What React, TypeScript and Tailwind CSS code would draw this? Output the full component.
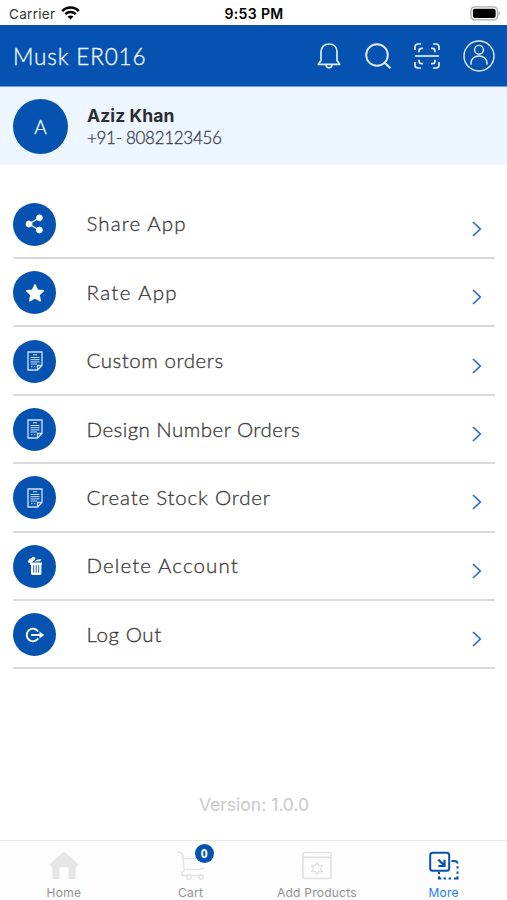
import React from 'react';

const ShareIcon = () => (
    <svg width="19" height="20" viewBox="0 0 19 20" fill="#fff" stroke="#fff">
        <path d="M4 10 L14 4 M4 10 L14 16" strokeWidth="1.3" fill="none" />
        <circle cx="4" cy="10" r="3" />
        <circle cx="14.4" cy="3.8" r="2.9" />
        <circle cx="14.4" cy="16" r="2.9" />
    </svg>
);

const StarIcon = () => (
    <svg width="20" height="20" viewBox="0 0 20 20" fill="#fff" stroke="#fff" strokeWidth="1.4" strokeLinejoin="round">
        <path d="M10 1.8 L12.5 7.1 L18.5 7.7 L14.1 11.8 L15.3 17.8 L10 14.9 L4.7 17.8 L5.9 11.8 L1.5 7.7 L7.5 7.1 Z" />
    </svg>
);

const OrderIcon = () => (
    <svg width="16" height="20" viewBox="0 0 16 20" fill="none" stroke="#cfe1f8" strokeWidth="1.3">
        <path d="M1 1 H15 V14.5 L10.5 19 H1 Z M15 14.5 H10.5 V19" />
        <path d="M6 3.8 H10 M3.5 6.5 H12.5 M3.5 8.7 H12.5 M3.5 10.9 H12.5 M3.5 13 H10 M4 15.7 H5.5 M7 15.7 H8.2" strokeWidth="1" />
    </svg>
);

const TrashIcon = () => (
    <svg width="16" height="20" viewBox="0 0 16 20" fill="#fff">
        <path d="M3 6.4 H15 V9 H14.4 V17.6 Q14.4 19 13 19 H5.4 Q4 19 4 17.6 V9 H3 Z" />
        <path d="M6.7 9.3 V16.6 M9.2 9.3 V16.6 M11.7 9.3 V16.6" stroke="#0552b0" strokeWidth="0.9" />
        <path d="M0.8 6.2 L2 3 L4.5 2.1 L6 0.7 L8.6 1.8 L7.6 4.2 L3.6 7.2 Z" />
        <path d="M7.3 5.5 L10.5 3.4 L14.5 3.2 L13 5.3 Z" />
    </svg>
);

const LogoutIcon = () => (
    <svg width="20" height="16" viewBox="0 0 20 16" fill="none" stroke="#fff" strokeWidth="1.8">
        <path d="M13.2 4.4 A6.3 6.3 0 1 0 13.2 11.6" />
        <path d="M6 8 H16" />
        <path d="M14.5 4.6 L19.2 8 L14.5 11.4 Z" fill="#fff" stroke="none" />
    </svg>
);

const menu = [
    { label: 'Share App', icon: <ShareIcon />, spacing: 'tracking-[1.1px]' },
    { label: 'Rate App', icon: <StarIcon />, spacing: 'tracking-[1.35px]' },
    { label: 'Custom orders', icon: <OrderIcon />, spacing: 'tracking-[0.55px]' },
    { label: 'Design Number Orders', icon: <OrderIcon />, spacing: 'tracking-[0.45px]' },
    { label: 'Create Stock Order', icon: <OrderIcon />, spacing: 'tracking-[0.8px]' },
    { label: 'Delete Account', icon: <TrashIcon />, spacing: 'tracking-[1.1px]' },
    { label: 'Log Out', icon: <LogoutIcon />, spacing: 'tracking-[0.6px]' },
];

const StatusBar = () => (
    <div className="grid h-[25px] grid-cols-3 items-center pt-[3px] pr-[6px] pl-[9px] text-black">
        <div className="flex items-center gap-[6px] text-[13.5px] tracking-[0.3px] text-[#333]">
            Carrier
            <svg width="19" height="14" viewBox="0 0 19 14" fill="none" stroke="#000" strokeWidth="2.5" className="-mt-[2px]">
                <path d="M1.2 5.1 C5.8 0.4 13.2 0.4 17.8 5.1" />
                <path d="M4.3 8.2 C7.2 5.4 11.8 5.4 14.7 8.2" />
                <path d="M9.5 13.5 L6.5 10.6 Q9.5 8.2 12.5 10.6 Z" fill="#000" stroke="none" />
            </svg>
        </div>
        <div className="-mt-px -ml-[2px] text-center text-[14px] font-semibold tracking-[0.35px] whitespace-nowrap">9:53 PM</div>
        <div className="flex justify-end">
            <svg width="31" height="15" viewBox="0 0 31 15" className="-mt-[2px]">
                <rect x="1" y="0.8" width="26.5" height="13" rx="3.6" fill="#fff" stroke="#aaa" strokeWidth="1.3" />
                <rect x="2.9" y="2.7" width="22.7" height="9.2" rx="1.8" fill="#000" />
                <path d="M28.6 5 Q31.4 7.2 28.6 9.5 Z" fill="#aaa" />
            </svg>
        </div>
    </div>
);

const Header = () => (
    <header className="flex h-[62px] items-center border-b border-[#6d9edb] bg-[#0552b0] pr-[11px] pl-[13px]">
        <h1 className="mt-[2px] flex-1 font-[Lato] text-[22.5px] font-light tracking-[0.85px] text-[#edf4ff] [-webkit-text-stroke:0.35px_#edf4ff]">Musk ER016</h1>
        <svg width="24" height="28" viewBox="0 0 24 28" fill="none" stroke="#e2eeff" strokeWidth="1.7" strokeLinejoin="round">
            <path d="M1.3 22.3 L4 18.5 V10 C4 5 7.3 2 12 2 C16.7 2 20 5 20 10 V18.5 L22.7 22.3 Z" />
            <path d="M9 22.8 C9.3 26.9 14.7 26.9 15 22.8" />
        </svg>
        <svg width="28" height="28" viewBox="0 0 28 28" fill="none" stroke="#e2eeff" strokeWidth="1.9" className="ml-[23px]">
            <circle cx="13" cy="13" r="10.8" />
            <path d="M20.7 20.7 L26.5 26.2" strokeWidth="2.2" />
        </svg>
        <svg width="28" height="28" viewBox="0 0 28 28" fill="none" stroke="#e2eeff" strokeWidth="1.7" className="ml-[21px]">
            <path d="M2 8 V5 Q2 2 5 2 H8 M20 2 H23 Q26 2 26 5 V8 M2 20 V23 Q2 26 5 26 H8 M20 26 H23 Q26 26 26 23 V20" />
            <path d="M6 10.3 V9 Q6 6.3 8.7 6.3 H10 M18 6.3 H19.3 Q22 6.3 22 9 V10.3 M6 17.7 V19 Q6 21.7 8.7 21.7 H10 M18 21.7 H19.3 Q22 21.7 22 19 V17.7" />
            <path d="M2 14 H26" />
        </svg>
        <svg width="34" height="34" viewBox="0 0 34 34" fill="none" stroke="#e2eeff" strokeWidth="1.4" className="ml-[21px]">
            <circle cx="17" cy="17" r="15" />
            <circle cx="17" cy="10.8" r="4.4" />
            <path d="M9 25.8 V24 C9 14.7 25 14.7 25 24 V25.8" />
        </svg>
    </header>
);

const Profile = () => (
    <section className="flex h-[78px] items-center bg-[#edf5ff] pl-[13px]">
        <div className="flex size-[55px] items-center justify-center rounded-full bg-[#0552b0] pt-[2px] font-[Lato] text-[19px] font-light text-[#edf4ff] [-webkit-text-stroke:0.35px_#edf4ff]">A</div>
        <div className="ml-[19px] pt-px">
            <div className="text-[17.5px] leading-[23px] font-bold tracking-[0.1px] text-[#2b2d31]">Aziz Khan</div>
            <div className="font-[Lato] text-[17px] leading-[22px] font-light tracking-[-0.3px] text-[#3c4148] [-webkit-text-stroke:0.3px_#3c4148]">+91- 8082123456</div>
        </div>
    </section>
);

const TabBar = () => (
    <nav className="grid h-[60px] grid-cols-4 border-t border-[#e7e7e7] bg-[#fdfdfd] text-[12px] tracking-[0.25px] text-[#929292]">
        <div className="flex flex-col items-center pt-[10px] pl-px">
            <svg width="30" height="30" viewBox="0 0 30 30" fill="#e6e6e6">
                <path d="M15 1 Q16 1 17 2 L29.5 13.5 L27.5 16 H26.5 V28 H19.5 V18 Q19.5 16 17.5 16 H12.5 Q10.5 16 10.5 18 V28 H3.5 V16 H2.5 L0.5 13.5 L13 2 Q14 1 15 1 Z" />
            </svg>
            <span className="mt-[4px] leading-[16px]">Home</span>
        </div>
        <div className="flex flex-col items-center pt-[10px] pl-px">
            <div className="relative">
                <svg width="30" height="30" viewBox="0 0 30 30" fill="none" stroke="#e3e3e3" strokeWidth="1.5">
                    <path d="M1.5 1 C5 1 7 2.7 7 6 L8 18.5 H24 Q26.5 18.5 27.5 16 M7.3 7.5 H21 M9 19 C3.5 23 6 24.5 8 24.5 H27" />
                    <circle cx="13" cy="26" r="2.3" />
                    <circle cx="25" cy="26" r="2.3" />
                </svg>
                <span className="absolute -top-[7px] left-[19px] flex size-[19px] items-center justify-center rounded-full bg-[#0552b0] font-['Open_Sans'] text-[12px] font-bold tracking-normal text-white">0</span>
            </div>
            <span className="mt-[4px] leading-[16px]">Cart</span>
        </div>
        <div className="flex flex-col items-center pt-[10px]">
            <svg width="30" height="30" viewBox="0 0 30 30" fill="none" stroke="#e1e1e1" strokeWidth="1.6">
                <rect x="1" y="1.5" width="28" height="26" rx="2" />
                <path d="M1 6.3 H29" />
                <path d="M15 11.5 L16.8 14.5 H20.3 L18.6 17.5 L20.3 20.5 H16.8 L15 23.5 L13.2 20.5 H9.7 L11.4 17.5 L9.7 14.5 H13.2 Z" strokeWidth="1.3" />
            </svg>
            <span className="mt-[4px] leading-[16px] whitespace-nowrap">Add Products</span>
        </div>
        <div className="flex flex-col items-center pt-[10px] text-[#1b7ff0]">
            <svg width="30" height="30" viewBox="0 0 30 30" fill="none" stroke="#0552b0" strokeWidth="2">
                <rect x="1.2" y="1.7" width="19" height="18" rx="2.5" />
                <path d="M9.3 8.6 L15 14.2 M15.5 8.8 V15 H9.3" strokeWidth="2.2" />
                <path d="M22.5 10 H25.5 Q28.5 10 28.5 12.5 M28.5 15.3 V17.5 M28.5 20.5 V22.7 M28.5 25.3 V27.5 H25 M22 27.5 H19.6 M17 27.5 H14.6 M12.3 27.5 H10 V25.3 M10 23.3 V21" />
            </svg>
            <span className="mt-[4px] leading-[16px]">More</span>
        </div>
    </nav>
);

const App: React.FC = () => {
    return (
        <div className="flex h-[900px] w-[507px] flex-col overflow-hidden bg-white font-[Inter,sans-serif]">
            <StatusBar />
            <Header />
            <Profile />
            <main className="flex flex-1 flex-col pt-[25.6px] pr-[12px] pl-[13px]">
                {menu.map((item) => (
                    <div key={item.label} className="flex h-[68.4px] shrink-0 items-center border-b-2 border-[#d9d9d9]">
                        <div className="mt-px flex size-[43px] items-center justify-center rounded-full bg-[#0552b0]">{item.icon}</div>
                        <span className={`ml-[30.5px] flex-1 font-[Lato] text-[20.5px] font-light text-[#3a3a3a] [-webkit-text-stroke:0.3px_#3a3a3a] ${item.spacing}`}>{item.label}</span>
                        <svg width="10" height="16" viewBox="0 0 10 16" fill="none" stroke="#2a6fc0" strokeWidth="1.7" className="mt-[10px] mr-[13px]">
                            <path d="M1 1 L8.3 8 L1 15" />
                        </svg>
                    </div>
                ))}
                <div className="mt-auto mb-[24px] text-center text-[17.5px] leading-[22px] text-[#c9c9c9]">Version: 1.0.0</div>
            </main>
            <TabBar />
        </div>
    );
};

export default App;
